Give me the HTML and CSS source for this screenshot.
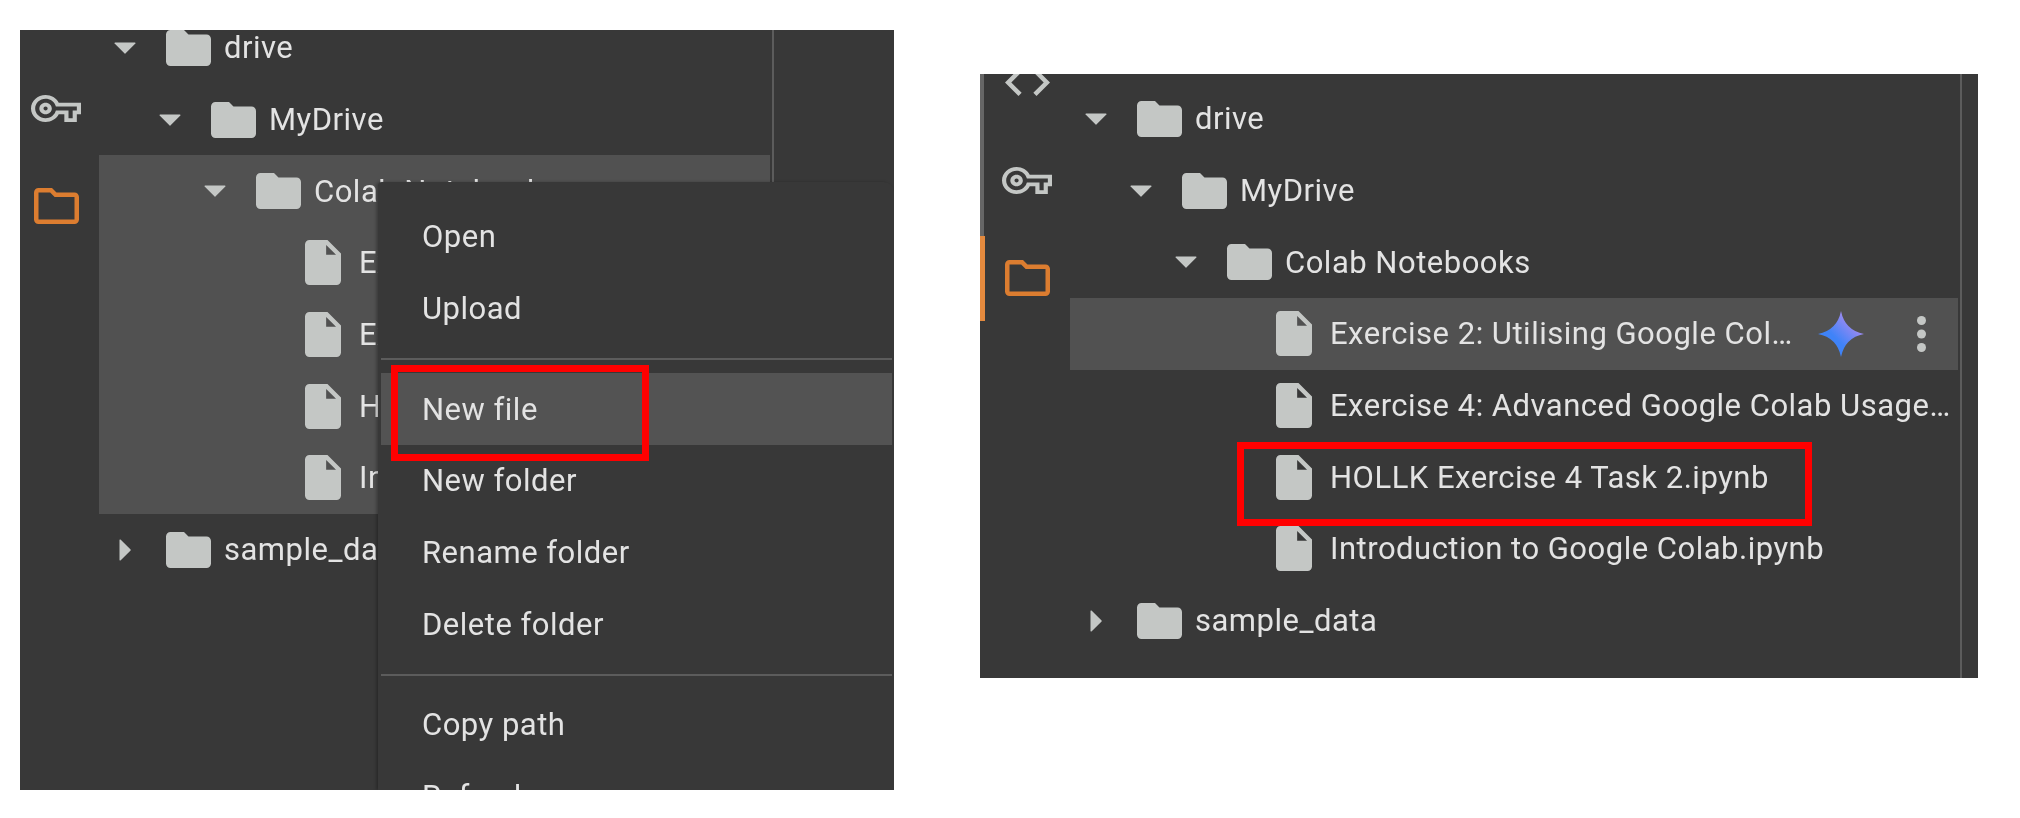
FILE: index.html
```html
<!DOCTYPE html>
<html lang="en">
<head>
<meta charset="utf-8">
<title>Colab file browser</title>
<link rel="stylesheet" href="styles.css">
</head>
<body>
<svg class="defs" width="0" height="0" aria-hidden="true">
  <defs>
    <symbol id="i-folder" viewBox="2 4 20 16"><path d="M10 4H4c-1.1 0-2 .9-2 2v12c0 1.1.9 2 2 2h16c1.1 0 2-.9 2-2V8c0-1.1-.9-2-2-2h-8l-2-2z"/></symbol>
    <symbol id="i-file" viewBox="4 2 16 20"><path d="M14 2H6c-1.1 0-2 .9-2 2v16c0 1.1.9 2 2 2h12c1.1 0 2-.9 2-2V8l-6-6zm-.6 6.6V4.2l4.4 4.4h-4.4z" fill-rule="evenodd"/></symbol>
    <symbol id="i-down" viewBox="0 0 22 12"><path d="M1 0.5h20a.6.6 0 0 1 .4 1L11.4 11.6a.6.6 0 0 1-.8 0L.6 1.5A.6.6 0 0 1 1 .5z"/></symbol>
    <symbol id="i-right" viewBox="0 0 12 22"><path d="M.5 1v20a.6.6 0 0 0 1 .4L11.6 11.4a.6.6 0 0 0 0-.8L1.5.6A.6.6 0 0 0 .5 1z"/></symbol>
    <symbol id="i-key" viewBox="0 5 24 14" preserveAspectRatio="none"><path d="M22 19h-6v-4h-2.68c-1.14 2.42-3.6 4-6.32 4-3.86 0-7-3.14-7-7s3.14-7 7-7c2.72 0 5.17 1.58 6.32 4H24v6h-2v4zm-4-2h2v-4h2v-2H11.94l-.23-.67C11.01 8.34 9.11 7 7 7c-2.76 0-5 2.24-5 5s2.24 5 5 5c2.11 0 4.01-1.34 4.71-3.33l.23-.67H18v4zM7 15c-1.65 0-3-1.35-3-3s1.35-3 3-3 3 1.35 3 3-1.35 3-3 3zm0-4c-.55 0-1 .45-1 1s.45 1 1 1 1-.45 1-1-.45-1-1-1z"/></symbol>
    <symbol id="i-code" viewBox="2 6 20 12"><path d="M9.4 16.6L4.8 12l4.6-4.6L8 6l-6 6 6 6 1.4-1.4zm5.2 0l4.6-4.6-4.6-4.6L16 6l6 6-6 6-1.4-1.4z"/></symbol>
    <symbol id="i-outline" viewBox="2 4 20 16"><path d="M9.17 6l2 2H20v10H4V6h5.17M10 4H4c-1.1 0-1.99.9-1.99 2L2 18c0 1.1.9 2 2 2h16c1.1 0 2-.9 2-2V8c0-1.1-.9-2-2-2h-8l-2-2z"/></symbol>
    <linearGradient id="spark" x1="0.15" y1="0.85" x2="0.85" y2="0.15">
      <stop offset="0.35" stop-color="#3f83f8"/>
      <stop offset="1" stop-color="#b68cf0"/>
    </linearGradient>
  </defs>
</svg>

<main class="page">
  <section class="panel panel-left">
    <nav class="rail">
      <div class="rail-item"><svg class="ic-code"><use href="#i-code"/></svg></div>
      <div class="rail-item"><svg class="ic-key"><use href="#i-key"/></svg></div>
      <div class="rail-item"><svg class="ic-outline"><use href="#i-outline"/></svg></div>
    </nav>
    <div class="tree">
      <div class="row lvl0"><span class="caret"><svg class="down"><use href="#i-down"/></svg></span><svg class="folder"><use href="#i-folder"/></svg><span class="name">drive</span></div>
      <div class="row lvl1"><span class="caret"><svg class="down"><use href="#i-down"/></svg></span><svg class="folder"><use href="#i-folder"/></svg><span class="name">MyDrive</span></div>
      <div class="group-hover">
        <div class="row lvl2"><span class="caret"><svg class="down"><use href="#i-down"/></svg></span><svg class="folder"><use href="#i-folder"/></svg><span class="name">Colab Notebooks</span></div>
        <div class="row file"><svg class="doc"><use href="#i-file"/></svg><span class="name">Exercise 2: Utilising Google Colab.ipynb</span></div>
        <div class="row file"><svg class="doc"><use href="#i-file"/></svg><span class="name">Exercise 4: Advanced Google Colab Usage.ipynb</span></div>
        <div class="row file"><svg class="doc"><use href="#i-file"/></svg><span class="name">HOLLK Exercise 4 Task 2.ipynb</span></div>
        <div class="row file"><svg class="doc"><use href="#i-file"/></svg><span class="name">Introduction to Google Colab.ipynb</span></div>
      </div>
      <div class="row lvl0"><span class="caret"><svg class="right"><use href="#i-right"/></svg></span><svg class="folder"><use href="#i-folder"/></svg><span class="name">sample_data</span></div>
    </div>
    <div class="divider"></div>

    <div class="menu">
      <div class="menu-item">Open</div>
      <div class="menu-item">Upload</div>
      <div class="menu-sep"></div>
      <div class="menu-item is-hover">New file</div>
      <div class="menu-item">New folder</div>
      <div class="menu-item">Rename folder</div>
      <div class="menu-item">Delete folder</div>
      <div class="menu-sep"></div>
      <div class="menu-item">Copy path</div>
      <div class="menu-item">Refresh</div>
    </div>
    <div class="callout callout-left"></div>
  </section>

  <section class="panel panel-right">
    <nav class="rail">
      <div class="rail-item"><svg class="ic-code"><use href="#i-code"/></svg></div>
      <div class="rail-item"><svg class="ic-key"><use href="#i-key"/></svg></div>
      <div class="rail-item is-active"><svg class="ic-outline"><use href="#i-outline"/></svg></div>
    </nav>
    <div class="tree">
      <div class="row lvl0"><span class="caret"><svg class="down"><use href="#i-down"/></svg></span><svg class="folder"><use href="#i-folder"/></svg><span class="name">drive</span></div>
      <div class="row lvl1"><span class="caret"><svg class="down"><use href="#i-down"/></svg></span><svg class="folder"><use href="#i-folder"/></svg><span class="name">MyDrive</span></div>
      <div class="row lvl2"><span class="caret"><svg class="down"><use href="#i-down"/></svg></span><svg class="folder"><use href="#i-folder"/></svg><span class="name">Colab Notebooks</span></div>
      <div class="row file is-hover">
        <svg class="doc"><use href="#i-file"/></svg>
        <span class="name">Exercise 2: Utilising Google Colab.ipynb</span>
        <svg class="sparkle" viewBox="0 0 24 24"><path fill="url(#spark)" d="M12 0Q14 10 24 12 14 14 12 24 10 14 0 12 10 10 12 0Z"/></svg>
        <svg class="dots" viewBox="0 0 9 36"><circle cx="4.5" cy="4.5" r="4.5"/><circle cx="4.5" cy="18" r="4.5"/><circle cx="4.5" cy="31.500" r="4.5"/></svg>
      </div>
      <div class="row file"><svg class="doc"><use href="#i-file"/></svg><span class="name">Exercise 4: Advanced Google Colab Usage.ipynb</span></div>
      <div class="row file"><svg class="doc"><use href="#i-file"/></svg><span class="name">HOLLK Exercise 4 Task 2.ipynb</span></div>
      <div class="row file"><svg class="doc"><use href="#i-file"/></svg><span class="name">Introduction to Google Colab.ipynb</span></div>
      <div class="row lvl0"><span class="caret"><svg class="right"><use href="#i-right"/></svg></span><svg class="folder"><use href="#i-folder"/></svg><span class="name">sample_data</span></div>
    </div>
    <div class="divider"></div>
    <div class="callout callout-right"></div>
  </section>
</main>
</body>
</html>
```

FILE: styles.css
```css
* { box-sizing: border-box; }

html, body {
  margin: 0;
  height: 100%;
  background: #fff;
  overflow: hidden;
}

.defs { position: absolute; }

.page {
  display: flex;
  align-items: flex-start;
  padding-left: 20px;
  font-family: Roboto, "Liberation Sans", sans-serif;
  font-size: 31px;
  letter-spacing: .5px;
  color: #e3e3e3;
}

.panel {
  position: relative;
  display: flex;
  align-items: flex-start;
  flex: none;
  overflow: hidden;
  background: #383838;
  filter: blur(.5px);
}

.panel-left {
  width: 874px;
  height: 760px;
  margin-top: 30px;
}

.panel-right {
  width: 998px;
  height: 604px;
  margin-top: 74px;
  margin-left: 86px;
}

/* Icon rail */
.rail {
  flex: none;
  width: 90px;
  display: flex;
  flex-direction: column;
  gap: 13px;
  border-left: 4px solid #666;
  fill: #c4c7c5;
}

.panel-left .rail { margin: -62.5px 0 0 -11px; }
.panel-right .rail { margin-top: -34.5px; }

.rail-item {
  height: 85px;
  display: flex;
  align-items: center;
  padding-left: 21px;
}

.rail-item.is-active {
  margin-left: -4px;
  padding-left: 20px;
  border-left: 5px solid #e48a3e;
}

.ic-code { width: 45px; height: 27px; }
.ic-key { width: 50px; height: 27px; margin-left: -3px; }
.ic-outline { width: 45px; height: 36px; fill: #dc7d30; }

/* File tree */
.tree { flex: none; }
.panel-left .tree { width: 671px; margin-top: -18px; }
.panel-right .tree { width: 888px; margin-top: 9px; }

.row {
  height: 71.7px;
  display: flex;
  align-items: center;
  white-space: nowrap;
  fill: #c4c7c5;
}

.lvl0 { padding-left: 15px; }
.lvl1 { padding-left: 60px; }
.lvl2 { padding-left: 105px; }
.row.file { padding: 0 3px 0 206px; }

.group-hover, .row.is-hover { background: #515151; }

.caret {
  flex: none;
  width: 22px;
  margin-right: 30px;
  display: flex;
  justify-content: center;
}

.down { width: 22px; height: 12px; }
.right { width: 12px; height: 22px; }
.folder { flex: none; width: 45px; height: 36px; margin-right: 13px; }
.doc { flex: none; width: 36px; height: 45px; margin-right: 18px; }

.name {
  flex: 1;
  min-width: 0;
  overflow: hidden;
  text-overflow: ellipsis;
}

.row.is-hover { padding-right: 32px; }
.sparkle { flex: none; width: 46px; height: 46px; margin-left: 17px; }
.dots { flex: none; width: 9px; height: 36px; margin-left: 53px; }

.divider {
  flex: none;
  align-self: stretch;
  width: 2px;
  margin-left: 2px;
  background: #5c5c5c;
}

/* Context menu */
.menu {
  position: absolute;
  left: 358px;
  top: 152px;
  right: 0;
  bottom: 0;
  padding: 19px 2px 0 3px;
  overflow: hidden;
  background: #383838;
  border-top-left-radius: 4px;
  border-top-right-radius: 10px;
  box-shadow: -2px 0 3px rgba(0, 0, 0, .25);
}

.menu-item {
  height: 71.67px;
  display: flex;
  align-items: center;
  padding-left: 41px;
}

.menu-item.is-hover { background: #535353; }

.menu-sep {
  height: 2px;
  margin: 14px 0 13px;
  background: #5c5c5c;
}

/* Red annotation boxes */
.callout {
  position: absolute;
  border: 7px solid #f00;
}

.callout-left { left: 371px; top: 335px; width: 258px; height: 96px; }
.callout-right { left: 257px; top: 368px; width: 575px; height: 84px; }
```
